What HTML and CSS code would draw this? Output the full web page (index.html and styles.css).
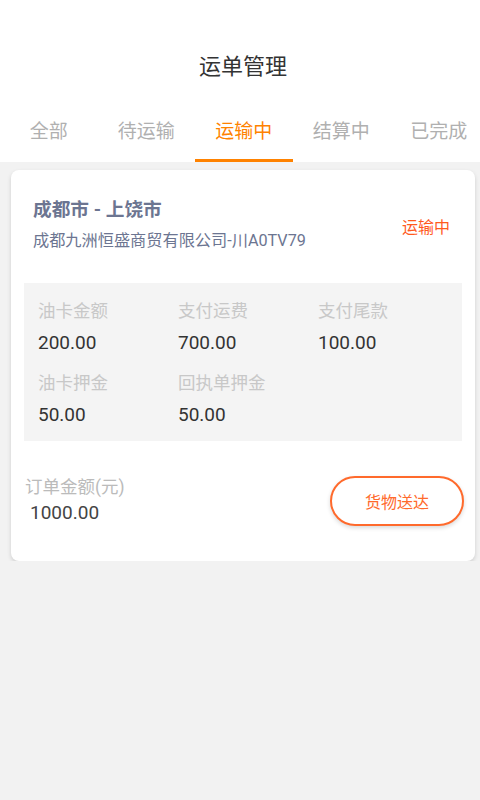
FILE: index.html
```html
<!DOCTYPE html>
<html lang="zh-CN">
<head>
    <meta charset="UTF-8">
    <meta name="viewport" content="width=device-width, initial-scale=1.0">
    <title>运单管理</title>
    <link rel="stylesheet" href="styles.css">
</head>
<body>
    <div class="top">
        <h1 class="title">运单管理</h1>
        <div class="tabs">
            <div class="tab">全部</div>
            <div class="tab">待运输</div>
            <div class="tab active">运输中</div>
            <div class="tab">结算中</div>
            <div class="tab">已完成</div>
        </div>
    </div>

    <div class="list">
        <div class="card">
            <div class="card-head">
                <div class="route-info">
                    <div class="route">成都市 - 上饶市</div>
                    <div class="company">成都九洲恒盛商贸有限公司-川A0TV79</div>
                </div>
                <div class="status">运输中</div>
            </div>

            <div class="fees">
                <div class="fee">
                    <div class="fee-label">油卡金额</div>
                    <div class="fee-value">200.00</div>
                </div>
                <div class="fee">
                    <div class="fee-label">支付运费</div>
                    <div class="fee-value">700.00</div>
                </div>
                <div class="fee">
                    <div class="fee-label">支付尾款</div>
                    <div class="fee-value">100.00</div>
                </div>
                <div class="fee">
                    <div class="fee-label">油卡押金</div>
                    <div class="fee-value">50.00</div>
                </div>
                <div class="fee">
                    <div class="fee-label">回执单押金</div>
                    <div class="fee-value">50.00</div>
                </div>
            </div>

            <div class="card-foot">
                <div class="total">
                    <div class="total-label">订单金额(元)</div>
                    <div class="total-value">1000.00</div>
                </div>
                <button class="deliver-btn">货物送达</button>
            </div>
        </div>
    </div>
</body>
</html>
```

FILE: styles.css
```css
body {
    margin: 0;
    background-color: #f2f2f2;
    font-family: Roboto, "Noto Sans CJK SC", sans-serif;
    color: #333;
}

.top {
    background-color: #fff;
    overflow: hidden;
}

.title {
    margin: 0;
    padding: 51px 0 0 6px;
    height: 32px;
    line-height: 32px;
    text-align: center;
    font-size: 22px;
    font-weight: normal;
    color: #333;
}

/* tab bar */
.tabs {
    display: grid;
    grid-template-columns: repeat(5, 97.5px);
    margin-top: 31px;
}

.tab {
    height: 48px;
    line-height: 36px;
    text-align: center;
    font-size: 19px;
    color: #b0b0b0;
    box-sizing: border-box;
}

.tab.active {
    color: #ff8200;
    border-bottom: 3px solid #ff8200;
}

.list {
    padding: 8px 5px 0 11px;
}

.card {
    background-color: #fff;
    border-radius: 8px;
    box-shadow: 0 2px 4px rgba(0, 0, 0, 0.15);
    padding: 27px 13px 34px 13px;
}

.card-head {
    display: flex;
    align-items: center;
    justify-content: space-between;
    padding: 0 12px 0 9px;
}

.route {
    font-size: 18.7px;
    font-weight: bold;
    line-height: 26px;
    color: #6c7591;
}

.company {
    font-size: 16.2px;
    line-height: 24px;
    margin-top: 6px;
    color: #6c7591;
}

.status {
    font-size: 16px;
    color: #ff5a1e;
    margin-top: 2px;
}

/* fee grid */
.fees {
    margin-top: 30px;
    background-color: #f4f4f4;
    display: grid;
    grid-template-columns: repeat(3, 140px);
    row-gap: 12px;
    padding: 15px 14px 11px;
}

.fee-label {
    font-size: 17.5px;
    line-height: 26px;
    color: #c8c8c8;
}

.fee-value {
    font-size: 19px;
    line-height: 30px;
    margin-top: 4px;
    color: #333;
}

.card-foot {
    display: flex;
    align-items: center;
    justify-content: space-between;
    margin-top: 34px;
    padding-left: 1px;
}

.total-label {
    font-size: 17.5px;
    line-height: 24px;
    color: #bbb;
}

.total-value {
    font-size: 19px;
    line-height: 28px;
    color: #444;
    padding-left: 5px;
}

.deliver-btn {
    width: 134px;
    height: 50px;
    border: 2px solid #ff6a2c;
    border-radius: 25px;
    background-color: #fff;
    color: #ff6a2c;
    font-family: "Noto Sans CJK SC", sans-serif;
    font-size: 16px;
    box-shadow: 0 2px 4px rgba(0, 0, 0, 0.15);
    margin-right: -2px;
}
```
